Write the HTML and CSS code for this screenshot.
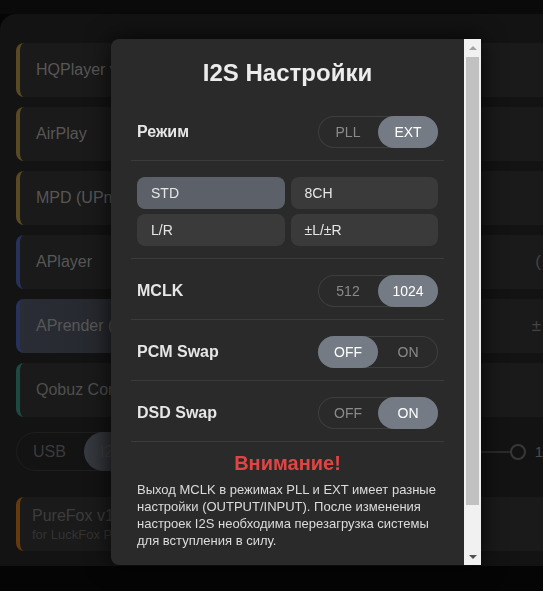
FILE: index.html
```html
<!DOCTYPE html>
<html lang="ru">
<head>
  <meta charset="UTF-8" />
  <meta name="viewport" content="width=device-width, initial-scale=1.0"/>
  <title>I2S Настройки</title>
  <link rel="stylesheet" href="styles.css">
</head>
<body>

  <div class="topbar"></div>

  <!-- background app (dimmed behind the dialog) -->
  <main class="app">
    <div class="card gold"><span>HQPlayer v5</span></div>
    <div class="card gold"><span>AirPlay</span></div>
    <div class="card gold"><span>MPD (UPnP)</span></div>
    <div class="card blue"><span>APlayer</span><span class="side">(</span></div>
    <div class="card blue lit"><span>APrender (DLNA)</span><span class="side">±</span></div>
    <div class="card teal"><span>Qobuz Connect</span></div>

    <div class="io-row">
      <div class="seg">
        <span>USB</span>
        <span class="on">I2S</span>
      </div>
      <div class="vol">
        <span class="line"></span>
        <span class="knob"></span>
        <span class="val">1</span>
      </div>
    </div>

    <div class="card orange tall">
      <div>
        <div>PureFox v1.2</div>
        <div class="sub">for LuckFox Pico</div>
      </div>
      <span class="ring"></span>
    </div>
  </main>

  <!-- dialog -->
  <div class="overlay">
    <div class="modal">
      <div class="modal-body">
        <h2 class="title">I2S Настройки</h2>

        <div class="row">
          <span class="label">Режим</span>
          <div class="toggle">
            <button>PLL</button>
            <button class="active">EXT</button>
          </div>
        </div>

        <div class="modes">
          <button class="active">STD</button>
          <button>8CH</button>
          <button>L/R</button>
          <button>±L/±R</button>
        </div>

        <div class="row">
          <span class="label">MCLK</span>
          <div class="toggle">
            <button>512</button>
            <button class="active">1024</button>
          </div>
        </div>

        <div class="row">
          <span class="label">PCM Swap</span>
          <div class="toggle">
            <button class="active">OFF</button>
            <button>ON</button>
          </div>
        </div>

        <div class="row">
          <span class="label">DSD Swap</span>
          <div class="toggle">
            <button>OFF</button>
            <button class="active">ON</button>
          </div>
        </div>

        <div class="warning">
          <h3>Внимание!</h3>
          <p>Выход MCLK в режимах PLL и EXT имеет разные настройки (OUTPUT/INPUT). После изменения настроек I2S необходима перезагрузка системы для вступления в силу.</p>
        </div>
      </div>

      <!-- classic scrollbar -->
      <div class="scrollbar">
        <span class="arrow up"></span>
        <span class="thumb"></span>
        <span class="arrow down"></span>
      </div>
    </div>
  </div>

</body>
</html>
```

FILE: styles.css
```css
* { box-sizing: border-box; margin: 0; padding: 0; }
html, body { height: 100%; }
body {
  font-family: "Liberation Sans", Arial, sans-serif;
  background: #050505;
  color: #e6e6e6;
  overflow: hidden;
}
.topbar {
  height: 14px;
  background: #0a0a0a;
}

/* background app */
.app {
  width: 600px;
  height: 552px;
  background: #131313;
  border-radius: 16px 16px 0 0;
  padding: 29px 0 0 16px;
}
.card {
  width: 560px;
  height: 54px;
  margin-bottom: 10px;
  background: #1a1a1a;
  border-left: 4px solid #5a4a24;
  border-radius: 8px;
  padding: 0 35px 0 16px;
  display: flex;
  align-items: center;
  justify-content: space-between;
  font-size: 16px;
  color: #575757;
}
.card.blue { border-left-color: #26325a; }
.card.teal { border-left-color: #1e4a44; color: #4f4f4f; }
.card.orange { border-left-color: #663a0e; color: #3d3d3d; }
.card.lit { background: linear-gradient(to right, #2a2d35, #1a1a1a 60%); }
.card .side { color: #444; font-size: 17px; }
.card.tall { margin-top: 26px; padding-left: 12px; }
.card .sub { font-size: 13px; color: #333; margin-top: 2px; }
.card .ring {
  width: 22px; height: 22px;
  border: 2px solid #2c2c2c;
  border-radius: 50%;
  margin-right: -25px;
}

.io-row {
  width: 527px;
  margin-top: 15px;
  display: flex;
  align-items: center;
  justify-content: space-between;
}
.seg {
  display: flex;
  height: 39px;
  border: 1px solid #1e1e1e;
  border-radius: 20px;
  font-size: 16px;
  color: #3b3b3b;
}
.seg span {
  display: flex;
  align-items: center;
  padding: 0 18px 0 16px;
}
.seg .on {
  background: linear-gradient(to right, #373a40, #1d1e20);
  border-radius: 20px;
  width: 80px;
  margin: -1px 0;
}
.vol {
  display: flex;
  align-items: center;
}
.vol .line {
  width: 100px;
  height: 2px;
  background: #2a2a2a;
}
.vol .knob {
  width: 16px; height: 16px;
  border: 2px solid #383838;
  border-radius: 50%;
}
.vol .val {
  margin-left: 9px;
  font-size: 15px;
  color: #4a4a4a;
}

/* dialog */
.overlay {
  position: fixed;
  inset: 0;
}
.modal {
  position: absolute;
  left: 111px;
  top: 39px;
  width: 370px;
  height: 526px;
  display: flex;
  background: #2a2a2a;
  border-radius: 8px 0 0 8px;
  box-shadow: 0 0 24px rgba(0,0,0,.75);
}
.modal-body {
  flex: 1;
  overflow: hidden;
  padding: 20px 20px 22px;
}
.scrollbar {
  width: 17px;
  background: #f1f1f1;
  display: flex;
  flex-direction: column;
  align-items: center;
}
.scrollbar .arrow {
  height: 17px;
  width: 17px;
  display: flex;
  align-items: center;
  justify-content: center;
}
.scrollbar .arrow::before {
  content: "";
  border-left: 4px solid transparent;
  border-right: 4px solid transparent;
}
.scrollbar .up::before { border-bottom: 4px solid #a3a3a3; }
.scrollbar .down { margin-top: auto; }
.scrollbar .down::before { border-top: 4px solid #505050; }
.scrollbar .thumb {
  width: 13px;
  height: 448px;
  margin-top: 1px;
  background: #c1c1c1;
}

.title {
  font-size: 24px;
  line-height: 28px;
  font-weight: bold;
  text-align: center;
  color: #ececec;
  margin-bottom: 13px;
}
.row {
  display: flex;
  align-items: center;
  justify-content: space-between;
  padding: 16px 6px 12px;
  border-bottom: 1px solid #3b3b3b;
}
.label {
  font-size: 16px;
  font-weight: bold;
  color: #e6e6e6;
}
.toggle {
  display: flex;
  border-radius: 16px;
  box-shadow: inset 0 0 0 1px #3e3e3e;
}
.toggle button {
  width: 60px;
  height: 32px;
  border: none;
  border-radius: 16px;
  background: transparent;
  font-family: inherit;
  font-size: 14px;
  color: #8a8a8a;
}
.toggle button.active {
  background: #747b85;
  color: #fff;
}
.modes {
  display: grid;
  grid-template-columns: 1fr 1fr;
  gap: 5px 6px;
  padding: 16px 6px 12px;
  border-bottom: 1px solid #3b3b3b;
}
.modes button {
  height: 32px;
  border: none;
  border-radius: 8px;
  background: #3a3a3a;
  color: #e6e6e6;
  font-family: inherit;
  font-size: 14px;
  text-align: left;
  padding-left: 14px;
}
.modes button.active { background: #5c6169; }

.warning {
  padding: 9px 6px 0;
}
.warning h3 {
  font-size: 20px;
  line-height: 24px;
  font-weight: bold;
  text-align: center;
  color: #df4545;
  margin-bottom: 6px;
}
.warning p {
  font-size: 13px;
  line-height: 17px;
  color: #dcdcdc;
}
```
